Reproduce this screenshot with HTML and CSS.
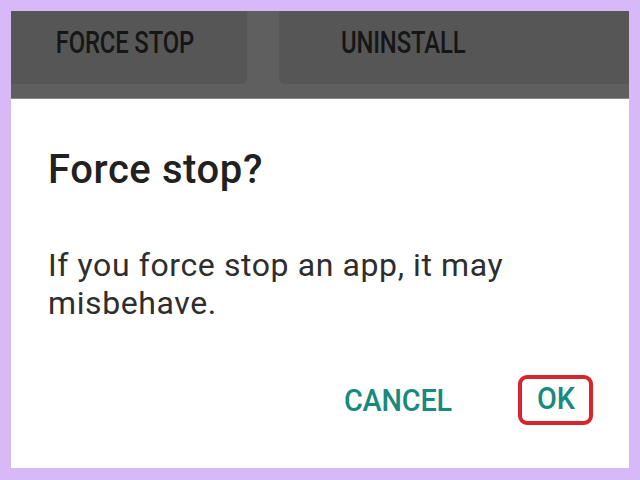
FILE: index.html
```html
<!DOCTYPE html>
<html lang="en">
<head>
    <meta charset="UTF-8">
    <title>Force stop?</title>
    <link rel="stylesheet" href="styles.css">
</head>
<body>

<div class="frame">
    <div class="screen">
        <div class="app-actions">
            <div class="action-btn left"><span class="cond">FORCE STOP</span></div>
            <div class="action-btn right"><span class="cond">UNINSTALL</span></div>
        </div>

        <div class="dialog">
            <h2>Force stop?</h2>
            <p>If you force stop an app, it may misbehave.</p>
            <div class="dialog-buttons">
                <span class="dlg-btn"><span class="cond">CANCEL</span></span>
                <span class="dlg-btn ok"><span class="cond">OK</span></span>
            </div>
        </div>
    </div>
</div>

</body>
</html>
```

FILE: styles.css
```css
* {
    margin: 0;
    padding: 0;
    box-sizing: border-box;
}

body {
    background: #d7b9f8;
    font-family: Roboto, "Noto Sans", sans-serif;
}

.frame {
    width: 640px;
    height: 480px;
    padding: 11px 11px 12px 11px;
}

.screen {
    background: #fff;
    height: 100%;
    display: flex;
    flex-direction: column;
}

/* top buttons from the app info screen */
.app-actions {
    background: #5f5f5f;
    height: 88px;
    display: flex;
    gap: 32px;
    border-bottom: 1px solid #8a8a8a;
}

.action-btn {
    background: #565656;
    height: 73px;
    border-radius: 0 0 6px 6px;
    display: flex;
    align-items: center;
    padding-bottom: 10px;
    color: #161616;
    font-size: 31px;
    font-weight: 500;
}

.action-btn.left {
    width: 236px;
    border-bottom-left-radius: 0;
    justify-content: center;
    padding-right: 8px;
}

.action-btn.right {
    flex: 1;
    padding-left: 62px;
    border-bottom-right-radius: 0;
}

.cond {
    display: inline-block;
    transform: scaleX(0.77);
    transform-origin: left center;
    letter-spacing: -0.2px;
}

.action-btn.left .cond {
    transform-origin: center;
}

.dialog {
    flex: 1;
    padding: 51px 30px 0 37px;
}

.dialog h2 {
    font-size: 40px;
    line-height: 40px;
    font-weight: 500;
    color: #212121;
    letter-spacing: 0.6px;
    margin-bottom: 56px;
}

.dialog p {
    font-size: 32px;
    line-height: 38px;
    color: #2e2e2e;
    letter-spacing: 0.6px;
    width: 540px;
}

.dialog-buttons {
    display: flex;
    justify-content: flex-end;
    align-items: center;
    margin-top: 53px;
    margin-right: 6px;
    gap: 66px;
    color: #178a7e;
    font-size: 32px;
    font-weight: 500;
}

.dlg-btn .cond {
    transform: scaleX(0.9);
    transform-origin: right center;
}

.dlg-btn.ok {
    border: 4px solid #d9232e;
    border-radius: 9px;
    width: 75px;
    height: 50px;
    display: flex;
    align-items: center;
    justify-content: center;
    padding-bottom: 4px;
}

.dlg-btn.ok .cond {
    transform-origin: center;
}
```
